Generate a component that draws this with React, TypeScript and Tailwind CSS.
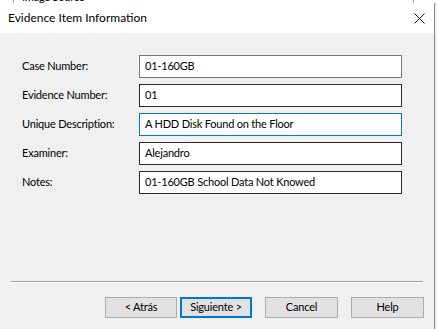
const font = { fontFamily: 'Lato, "Segoe UI", sans-serif' }

const fields = [
  { label: 'Case Number:', value: '01-160GB', border: 'border-[#7a7a7a]' },
  { label: 'Evidence Number:', value: '01', border: 'border-[#2b2b2b]' },
  { label: 'Unique Description:', value: 'A HDD Disk Found on the Floor', border: 'border-[#0078d7]' },
  { label: 'Examiner:', value: 'Alejandro', border: 'border-[#2b2b2b]' },
  { label: 'Notes:', value: '01-160GB School Data Not Knowed', border: 'border-[#2b2b2b]' },
]

function CloseIcon() {
  return (
    <svg width="11" height="11" viewBox="0 0 11 11">
      <path d="M0.5 0.5 L10.5 10.5 M10.5 0.5 L0.5 10.5" stroke="#111" strokeWidth="1" fill="none" />
    </svg>
  )
}

export default function App() {
  return (
    <div className="w-[437px] h-[329px] overflow-hidden bg-white flex flex-col text-[11px] tracking-[-0.2px] text-black" style={font}>
      {/* window behind the dialog */}
      <div className="h-[3px] overflow-hidden flex bg-white">
        <div className="w-[14px] border-r border-[#a0a0a0]" />
        <div className="flex-1 pl-[8px] leading-[12px] -mt-[9px]">Image Source</div>
        <div className="w-[24px] border-l border-[#a0a0a0]" />
      </div>

      <div className="flex-1 flex">
        <div className="w-[435px] border-r border-[#8c8c8c] flex flex-col">
          <div className="h-[30px] bg-white flex items-center justify-between pl-[8px] pr-[9px]">
            <span className="text-[12px] tracking-normal">Evidence Item Information</span>
            <CloseIcon />
          </div>

          <div className="flex-1 bg-[#f0f0f0] flex flex-col pt-[22px] pb-[11px]">
            <div className="flex flex-col gap-[6px] pl-[22px]">
              {fields.map((f) => (
                <div key={f.label} className="flex items-center">
                  <div className="w-[117px]">{f.label}</div>
                  <div className={`w-[263px] h-[23px] bg-white border ${f.border} flex items-center pl-[5px]`}>
                    {f.value}
                  </div>
                </div>
              ))}
            </div>

            <div className="flex-1" />

            <div className="mx-[11px] border-t border-[#a0a0a0] border-b border-b-white" />

            <div className="flex justify-end pr-[10px] mt-[14px]">
              <button className="w-[72px] h-[21px] bg-[#e1e1e1] border border-[#adadad]">&lt; Atrás</button>
              <button className="w-[72px] h-[21px] ml-[3px] bg-[#e1e1e1] border-2 border-[#0078d7]">Siguiente &gt;</button>
              <button className="w-[73px] h-[21px] ml-[13px] bg-[#e1e1e1] border border-[#adadad]">Cancel</button>
              <button className="w-[73px] h-[21px] ml-[13px] bg-[#e1e1e1] border border-[#adadad]">Help</button>
            </div>
          </div>
        </div>
        <div className="flex-1 bg-[#f0f0f0]" />
      </div>
    </div>
  )
}
